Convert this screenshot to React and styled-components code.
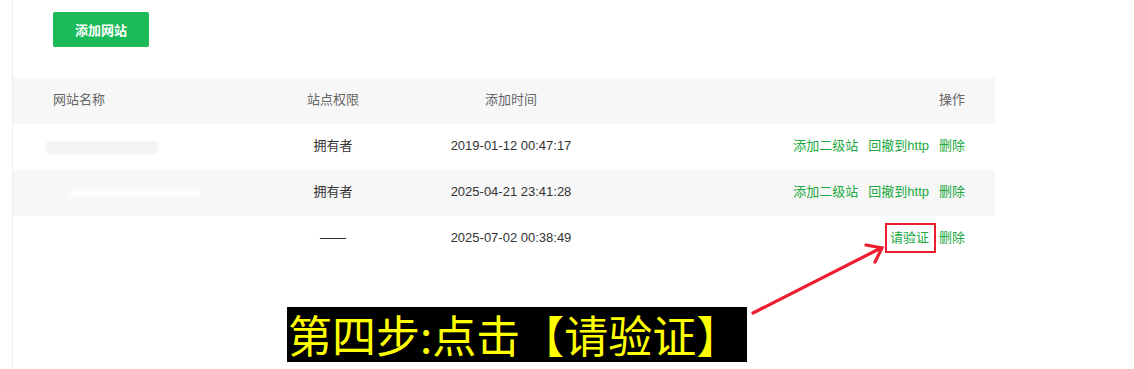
import React from "react";
import styled, { createGlobalStyle } from "styled-components";

const Global = createGlobalStyle`
  html, body { margin: 0; padding: 0; background: #fff; }
  body { font-family: "Liberation Sans", "Noto Sans CJK SC", sans-serif; font-size: 13px; color: #333; }
`;

const Page = styled.div`
  position: relative;
  margin-left: 12px;
  border-left: 1px solid #eeeeee;
  height: 369px;
  width: 982px;
`;

const Toolbar = styled.div`
  padding: 12px 0 0 40px;
  height: 78px;
  box-sizing: border-box;
`;

const AddButton = styled.button`
  width: 96px;
  height: 35px;
  border: none;
  border-radius: 2px;
  background: #1bba58;
  color: #fff;
  font-family: "Noto Sans CJK SC", sans-serif;
  font-size: 13px;
  font-weight: 600;
  padding: 0;
`;

const Row = styled.div`
  display: grid;
  grid-template-columns: 231px 178px 178px 1fr;
  height: 46px;
  box-sizing: border-box;
  padding-bottom: 3px;
  align-items: center;
  line-height: 18px;
  background: ${(p) => (p.$shade ? "#f7f7f7" : "#fff")};
  color: ${(p) => (p.$head ? "#666" : "#333")};
`;

const NameCell = styled.div`
  padding-left: 40px;
  display: flex;
  align-items: center;
`;

const CenterCell = styled.div`
  text-align: center;
`;

const ActionCell = styled.div`
  display: flex;
  justify-content: flex-end;
  gap: 10px;
  padding-right: 30px;
`;

const Blur = styled.span`
  display: block;
  margin-left: ${(p) => p.$ml}px;
  margin-top: ${(p) => p.$mt}px;
  width: ${(p) => p.$w}px;
  height: ${(p) => p.$h}px;
  border-radius: 4px;
  background: ${(p) => p.$c};
  filter: blur(1px);
`;

const Link = styled.a`
  position: relative;
  color: #20a83e;
  text-decoration: none;
  &::after {
    content: "";
    display: ${(p) => (p.$boxed ? "block" : "none")};
    position: absolute;
    left: -5px;
    right: -7px;
    top: -6px;
    bottom: -6px;
    border: 2px solid #ee1c2e;
  }
`;

const Caption = styled.div`
  margin: 45px 0 0 274px;
  width: 460px;
  height: 55px;
  background: #000;
  color: #ffff00;
  font-family: "Noto Sans CJK SC", sans-serif;
  font-size: 44px;
  line-height: 54px;
  padding-left: 1px;
  box-sizing: border-box;
  white-space: nowrap;
`;

const Arrow = styled.svg`
  position: absolute;
  left: 0;
  top: 0;
  pointer-events: none;
`;

const rows = [
  { shade: false, blob: { ml: -7, mt: 3, w: 112, h: 13, c: "#f3f3f3" }, role: "拥有者", time: "2019-01-12 00:47:17", full: true },
  { shade: true, blob: { ml: 17, mt: 3, w: 130, h: 5, c: "#ffffff" }, role: "拥有者", time: "2025-04-21 23:41:28", full: true },
  { shade: false, blob: null, role: "——", time: "2025-07-02 00:38:49", full: false },
];

export default function App() {
  return (
    <>
      <Global />
      <Page>
        <Toolbar>
          <AddButton>添加网站</AddButton>
        </Toolbar>
        <Row $shade $head>
          <NameCell>网站名称</NameCell>
          <CenterCell>站点权限</CenterCell>
          <CenterCell>添加时间</CenterCell>
          <ActionCell>操作</ActionCell>
        </Row>
        {rows.map((r, i) => (
          <Row key={i} $shade={r.shade}>
            <NameCell>
              {r.blob && (
                <Blur $ml={r.blob.ml} $mt={r.blob.mt} $w={r.blob.w} $h={r.blob.h} $c={r.blob.c} />
              )}
            </NameCell>
            <CenterCell>{r.role}</CenterCell>
            <CenterCell>{r.time}</CenterCell>
            <ActionCell>
              {r.full ? (
                <>
                  <Link>添加二级站</Link>
                  <Link>回撤到http</Link>
                </>
              ) : (
                <Link $boxed>请验证</Link>
              )}
              <Link>删除</Link>
            </ActionCell>
          </Row>
        ))}
        <Caption>第四步:点击【请验证】</Caption>
        <Arrow width="982" height="369" viewBox="0 0 982 369">
          <g stroke="#ee1c2e" strokeWidth="3.2" fill="none" strokeLinecap="round">
            <line x1="740" y1="313" x2="868" y2="248" />
            <polyline points="853,245 869,248 862,262" />
          </g>
        </Arrow>
      </Page>
    </>
  );
}
